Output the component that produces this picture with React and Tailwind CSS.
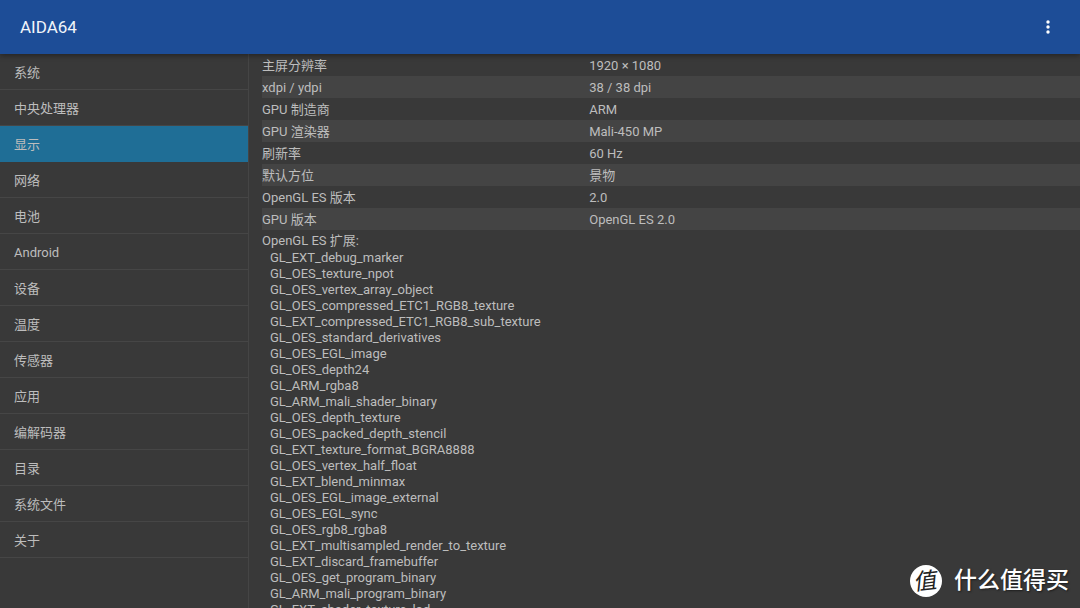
const SECTIONS = [
    "系统",
    "中央处理器",
    "显示",
    "网络",
    "电池",
    "Android",
    "设备",
    "温度",
    "传感器",
    "应用",
    "编解码器",
    "目录",
    "系统文件",
    "关于",
];

const DISPLAY_INFO = [
    ["主屏分辨率", "1920 × 1080"],
    ["xdpi / ydpi", "38 / 38 dpi"],
    ["GPU 制造商", "ARM"],
    ["GPU 渲染器", "Mali-450 MP"],
    ["刷新率", "60 Hz"],
    ["默认方位", "景物"],
    ["OpenGL ES 版本", "2.0"],
    ["GPU 版本", "OpenGL ES 2.0"],
];

const EXTENSIONS = [
    "GL_EXT_debug_marker",
    "GL_OES_texture_npot",
    "GL_OES_vertex_array_object",
    "GL_OES_compressed_ETC1_RGB8_texture",
    "GL_EXT_compressed_ETC1_RGB8_sub_texture",
    "GL_OES_standard_derivatives",
    "GL_OES_EGL_image",
    "GL_OES_depth24",
    "GL_ARM_rgba8",
    "GL_ARM_mali_shader_binary",
    "GL_OES_depth_texture",
    "GL_OES_packed_depth_stencil",
    "GL_EXT_texture_format_BGRA8888",
    "GL_OES_vertex_half_float",
    "GL_EXT_blend_minmax",
    "GL_OES_EGL_image_external",
    "GL_OES_EGL_sync",
    "GL_OES_rgb8_rgba8",
    "GL_EXT_multisampled_render_to_texture",
    "GL_EXT_discard_framebuffer",
    "GL_OES_get_program_binary",
    "GL_ARM_mali_program_binary",
    "GL_EXT_shader_texture_lod",
];

function Header() {
    return (
        <header className="z-10 flex h-[54px] shrink-0 items-center justify-between bg-[#1d4d97] px-5 shadow-[0_2px_5px_rgba(0,0,0,0.35)]">
            <h1 className="pt-0.5 text-[17px] text-[#f1f4f9]">AIDA64</h1>
            <button type="button" aria-label="更多选项" className="flex h-8 w-6 items-center justify-center">
                <svg viewBox="0 0 4 14" className="h-[14px] w-1 fill-white" aria-hidden="true">
                    <circle cx="2" cy="2" r="1.7" />
                    <circle cx="2" cy="7" r="1.7" />
                    <circle cx="2" cy="12" r="1.7" />
                </svg>
            </button>
        </header>
    );
}

function Sidebar({ active }) {
    return (
        <nav className="w-[249px] shrink-0 border-r border-[#454545]">
            <ul>
                {SECTIONS.map((name) => (
                    <li key={name}>
                        <button
                            type="button"
                            aria-current={name === active ? "page" : undefined}
                            className={`block h-9 w-full border-b px-[14px] pt-0.5 text-left ${
                                name === active
                                    ? "border-[#1f6e96] bg-[#1f6e96]"
                                    : "border-[#464646]"
                            }`}
                        >
                            {name}
                        </button>
                    </li>
                ))}
            </ul>
        </nav>
    );
}

function DisplayInfo() {
    return (
        <main className="min-w-0 flex-1 pl-[13px]">
            <table className="w-full table-fixed border-collapse leading-5">
                <tbody>
                    {DISPLAY_INFO.map(([label, value]) => (
                        <tr key={label} className="even:bg-[#444444]">
                            <th scope="row" className="w-2/5 p-0 pt-0.5 text-left font-normal">
                                {label}
                            </th>
                            <td className="p-0 pt-0.5">{value}</td>
                        </tr>
                    ))}
                </tbody>
            </table>
            <h2 className="pt-0.5 leading-[18px]">OpenGL ES 扩展:</h2>
            <ul className="pl-2 leading-4">
                {EXTENSIONS.map((name) => (
                    <li key={name}>{name}</li>
                ))}
            </ul>
        </main>
    );
}

function Watermark() {
    return (
        <div className="absolute right-[11px] bottom-[11px] z-20 flex items-center gap-3 text-white">
            <span className="flex size-8 items-center justify-center rounded-full bg-white text-[23px] leading-none text-[#222222]">
                <span className="-skew-x-6 -skew-y-6">值</span>
            </span>
            <span className="text-[23px] leading-8 font-medium [text-shadow:1px_1px_2px_rgba(0,0,0,0.5)]">
                什么值得买
            </span>
        </div>
    );
}

export default function App() {
    return (
        <div className="relative flex h-screen flex-col overflow-hidden bg-[#393939] font-[Roboto,'Noto_Sans_CJK_SC',sans-serif] text-[13px] text-[#bdbdbd]">
            <Header />
            <div className="flex min-h-0 flex-1">
                <Sidebar active="显示" />
                <DisplayInfo />
            </div>
            <Watermark />
        </div>
    );
}
